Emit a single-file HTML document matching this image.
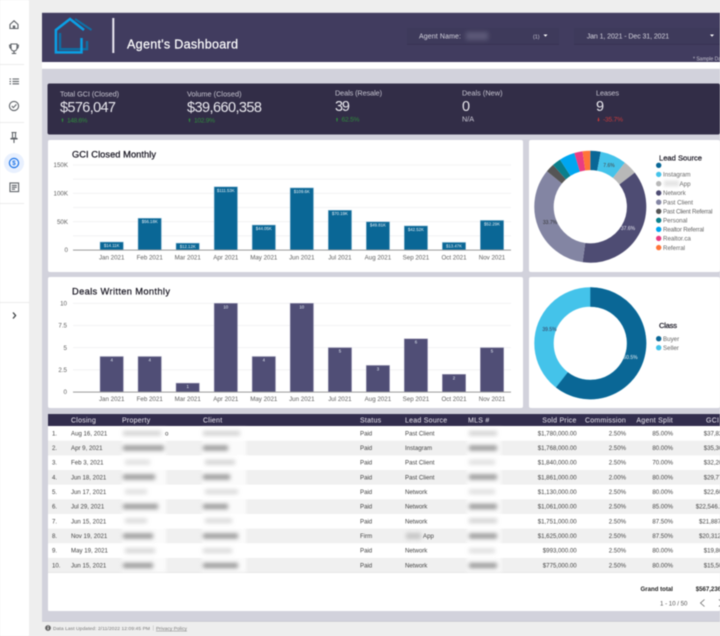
<!DOCTYPE html>
<html lang="en"><head><meta charset="utf-8"><title>Agent's Dashboard</title>
<style>
html,body{margin:0;padding:0;width:720px;height:636px;overflow:hidden;background:#eee}
svg{display:block;filter:blur(.4px)}
text{font-family:"Liberation Sans",sans-serif}
.k{font-size:7.3px;fill:#c8c6d2}
.v{font-size:14.5px;fill:#e9e8ee}
.u{font-size:6.6px;fill:#2f8a3c}
.ax{font-size:6.2px;fill:#5e5e5e}
.ttl{font-size:9.3px;fill:#15131f;stroke:#15131f;stroke-width:.22px}
.bl{font-size:4.3px;fill:#e6eef5;text-anchor:middle}
.lg{font-size:6.2px;fill:#666}
.lt{font-size:7.6px;fill:#15131f;stroke:#15131f;stroke-width:.2px}
.h{font-size:7px;fill:#eceaf2;letter-spacing:.25px}
.c{font-size:6.1px;fill:#444}
.e{text-anchor:end}
.m{text-anchor:middle}
.f{font-size:4.9px;fill:#777}
</style></head><body>
<svg width="720" height="636" viewBox="0 0 720 636" xmlns="http://www.w3.org/2000/svg">
<defs>
<filter id="b" filterUnits="userSpaceOnUse" x="0" y="0" width="720" height="636"><feGaussianBlur stdDeviation="2.1"/></filter>
<filter id="p" filterUnits="userSpaceOnUse" x="0" y="0" width="720" height="636"><feGaussianBlur stdDeviation="1.5"/></filter>
</defs>
<!-- page background -->
<rect width="720" height="636" fill="#eeeeee"/>
<rect x="0" y="0" width="29" height="636" fill="#fff"/>
<rect x="42" y="69" width="678" height="552" fill="#d2d2dc"/>
<rect x="42" y="621" width="678" height=".7" fill="#c4c4cc"/>
<!-- sidebar -->
<g fill="none" stroke="#5f6368" stroke-width="1.1">
<path d="M10 24.5 L14 20.8 L18 24.5 V28.5 H10 Z"/><rect x="12.8" y="25.5" width="2.4" height="3" fill="#5f6368" stroke="none"/>
<path d="M11 44 H17 V47.5 C17 50 15.5 51 14 51 C12.5 51 11 50 11 47.5 Z M11 45.2 H9.6 C9.6 47.5 10.5 48.5 11.4 48.7 M17 45.2 H18.4 C18.4 47.5 17.5 48.5 16.6 48.7 M14 51 V53 M11.8 53.4 H16.2"/>
<path d="M12.5 79 H19 M12.5 81.4 H19 M12.5 83.8 H19 M9.5 79 H11 M9.5 81.4 H11 M9.5 83.8 H11"/>
<circle cx="14" cy="106" r="4.6"/><path d="M11.8 106 L13.4 107.6 L16.4 104.4"/>
<path d="M11.5 132.5 H16.5 M12.5 132.5 V137.5 M15.5 132.5 V137.5 M10.5 139 C11.5 137.8 16.5 137.8 17.5 139 M10.5 139 H17.5 M14 139 V143"/>
</g>
<circle cx="14" cy="163" r="10" fill="#e8f0fe"/>
<circle cx="14" cy="163" r="4.6" fill="none" stroke="#1a73e8" stroke-width="1.2"/>
<text x="14" y="165.2" font-size="6.2" font-weight="bold" fill="#1a73e8" text-anchor="middle">$</text>
<g fill="none" stroke="#5f6368" stroke-width="1.1">
<rect x="10" y="183" width="8.6" height="8.6"/><path d="M11.8 185.4 H16.8 M11.8 187.3 H16.8 M11.8 189.2 H15"/>
<path d="M13 312.5 L15.6 315.5 L13 318.5" stroke="#3c4043" stroke-width="1.3"/>
</g>
<g fill="#ececec"><rect x="0" y="64" width="24" height="1"/><rect x="0" y="122" width="24" height="1"/><rect x="0" y="203" width="24" height="1"/><rect x="0" y="302" width="29" height="1"/></g>
<!-- header -->
<rect x="42" y="12.5" width="678" height=".8" fill="#a9a8b8"/>
<rect x="42" y="13" width="678" height="49" fill="#413c5f"/>
<rect x="42" y="62" width="678" height="6.5" fill="#fff"/>
<g fill="none" stroke-linejoin="miter">
<path d="M75 19 L91.5 30" stroke="#0f6fa5" stroke-width="2"/>
<path d="M60 33 V49.2 H87 V41" stroke="#0f6ea3" stroke-width="2.4"/>
<path d="M81.5 38 V52.4 H55.9 V30 L70 19 L84 30" stroke="#0aa0e6" stroke-width="2.5"/>
</g>
<rect x="112.3" y="18" width="2" height="35" fill="#eceaf2"/>
<text x="127" y="48.5" font-size="12.6" fill="#fff" stroke="#fff" stroke-width=".2" textLength="111" lengthAdjust="spacing">Agent's Dashboard</text>
<rect x="407" y="28" width="152" height="16.5" fill="#3e3a5b"/>
<rect x="407" y="44" width="152" height=".7" fill="#35314f"/>
<text x="419" y="38.7" font-size="7" fill="#d5d4de" textLength="42" lengthAdjust="spacing">Agent Name:</text>
<rect x="466" y="32" width="22" height="8" fill="#5c5877" filter="url(#b)"/>
<text x="533" y="38.5" font-size="5.4" fill="#c4c2d0">(1)</text>
<path d="M543.5 34.5 h4 l-2 2.2z" fill="#fff"/>
<rect x="574" y="28" width="146" height="16.5" fill="#3e3a5b"/>
<rect x="574" y="44" width="146" height=".7" fill="#35314f"/>
<text x="586.7" y="38.7" font-size="7" fill="#d5d4de" textLength="82.5" lengthAdjust="spacing">Jan 1, 2021 - Dec 31, 2021</text>
<path d="M710 34.5 h4 l-2 2.2z" fill="#fff"/>
<text x="693" y="60.7" font-size="5" fill="#c9c7d3">* Sample Data</text>
<!-- KPI band -->
<rect x="47.5" y="83.5" width="672.5" height="51" rx="2" fill="#322d47"/>
<text class="k" x="60" y="96.5" textLength="59" lengthAdjust="spacing">Total GCI (Closed)</text>
<text class="v" x="60" y="112" textLength="56" lengthAdjust="spacing">$576,047</text>
<text class="u" x="67" y="122.7" textLength="20.5" lengthAdjust="spacing">148.6%</text>
<path d="M62.5 118 l1.2 2 h-.7 v2 h-1 v-2 h-.7z" fill="#2f8a3c"/>
<text class="k" x="187" y="96.5" textLength="54.5" lengthAdjust="spacing">Volume (Closed)</text>
<text class="v" x="187" y="112" textLength="75" lengthAdjust="spacing">$39,660,358</text>
<text class="u" x="194" y="122.7" textLength="21" lengthAdjust="spacing">102.9%</text>
<path d="M189.5 118 l1.2 2 h-.7 v2 h-1 v-2 h-.7z" fill="#2f8a3c"/>
<text class="k" x="335" y="95.5" textLength="47" lengthAdjust="spacing">Deals (Resale)</text>
<text class="v" x="335" y="111" textLength="15" lengthAdjust="spacing">39</text>
<text class="u" x="341.5" y="121.7" textLength="18" lengthAdjust="spacing">62.5%</text>
<path d="M337 117.5 l1.2 2 h-.7 v2 h-1 v-2 h-.7z" fill="#2f8a3c"/>
<text class="k" x="462" y="95.5" textLength="40.5" lengthAdjust="spacing">Deals (New)</text>
<text class="v" x="462" y="111">0</text>
<text class="k" x="462" y="121.7">N/A</text>
<text class="k" x="596" y="95.5" textLength="23" lengthAdjust="spacing">Leases</text>
<text class="v" x="596" y="111">9</text>
<text class="u" x="603" y="121.7" style="fill:#c93a3a" textLength="20" lengthAdjust="spacing">-35.7%</text>
<path d="M598.5 121.7 l1.2 -2 h-.7 v-2 h-1 v2 h-.7z" fill="#c93a3a"/>
<!-- cards -->
<rect x="48" y="140" width="475" height="132" rx="2" fill="#fff"/>
<rect x="529" y="140" width="191" height="132" rx="2" fill="#fff"/>
<rect x="48" y="277" width="475" height="131" rx="2" fill="#fff"/>
<rect x="529" y="277" width="191" height="131" rx="2" fill="#fff"/>
<!-- chart 1 -->
<text class="ttl" x="72" y="157.3" textLength="84" lengthAdjust="spacing">GCI Closed Monthly</text>
<g stroke="#efeff1" stroke-width=".8"><path d="M73 165H511M73 179.2H511M73 193.3H511M73 207.5H511M73 221.7H511M73 235.8H511"/></g>
<text class="ax e" x="68" y="167.2">150K</text><text class="ax e" x="68" y="195.5">100K</text><text class="ax e" x="68" y="223.9">50K</text><text class="ax e" x="68" y="252.2">0</text>
<g fill="#0a6796" stroke="#9cc4da" stroke-width=".5">
<rect x="100" y="242" width="23.4" height="8"/><rect x="138" y="218.2" width="23.4" height="31.8"/><rect x="176" y="243.1" width="23.4" height="6.9"/><rect x="214.1" y="186.8" width="23.4" height="63.2"/><rect x="252.1" y="225" width="23.4" height="25"/><rect x="290.1" y="187.9" width="23.4" height="62.1"/><rect x="328.2" y="210.2" width="23.4" height="39.8"/><rect x="366.2" y="221.8" width="23.4" height="28.2"/><rect x="404.2" y="225.9" width="23.4" height="24.1"/><rect x="442.3" y="242.4" width="23.4" height="7.6"/><rect x="480.3" y="220.4" width="23.4" height="29.6"/>
</g>
<text class="bl" x="111.7" y="247">$14.11K</text><text class="bl" x="149.7" y="223">$56.18K</text><text class="bl" x="187.7" y="248">$12.12K</text><text class="bl" x="225.8" y="192">$111.53K</text><text class="bl" x="263.8" y="230">$44.05K</text><text class="bl" x="301.8" y="193">$109.6K</text><text class="bl" x="339.9" y="215">$70.19K</text><text class="bl" x="377.9" y="226.5">$49.81K</text><text class="bl" x="415.9" y="231">$42.52K</text><text class="bl" x="454" y="247.5">$13.47K</text><text class="bl" x="492" y="225.5">$52.29K</text>
<rect x="73" y="249.6" width="438" height="1" fill="#9a9a9a"/>
<text class="ax m" x="111.7" y="259.3">Jan 2021</text><text class="ax m" x="149.7" y="259.3">Feb 2021</text><text class="ax m" x="187.7" y="259.3">Mar 2021</text><text class="ax m" x="225.8" y="259.3">Apr 2021</text><text class="ax m" x="263.8" y="259.3">May 2021</text><text class="ax m" x="301.8" y="259.3">Jun 2021</text><text class="ax m" x="339.9" y="259.3">Jul 2021</text><text class="ax m" x="377.9" y="259.3">Aug 2021</text><text class="ax m" x="415.9" y="259.3">Sep 2021</text><text class="ax m" x="454" y="259.3">Oct 2021</text><text class="ax m" x="492" y="259.3">Nov 2021</text>
<!-- chart 2 -->
<text class="ttl" x="72" y="294.3" textLength="98" lengthAdjust="spacing">Deals Written Monthly</text>
<g stroke="#efeff1" stroke-width=".8"><path d="M73 303.3H511M73 325.5H511M73 347.6H511M73 369.8H511"/></g>
<text class="ax e" x="67" y="305.5">10</text><text class="ax e" x="67" y="327.7">7.5</text><text class="ax e" x="67" y="349.8">5</text><text class="ax e" x="67" y="372">2.5</text><text class="ax e" x="67" y="394.2">0</text>
<g fill="#504e76" stroke="#a8a7c0" stroke-width=".5">
<rect x="100" y="356.5" width="23.4" height="35.5"/><rect x="138" y="356.5" width="23.4" height="35.5"/><rect x="176" y="383.1" width="23.4" height="8.9"/><rect x="214.1" y="303.3" width="23.4" height="88.7"/><rect x="252.1" y="356.5" width="23.4" height="35.5"/><rect x="290.1" y="303.3" width="23.4" height="88.7"/><rect x="328.2" y="347.6" width="23.4" height="44.4"/><rect x="366.2" y="365.4" width="23.4" height="26.6"/><rect x="404.2" y="338.8" width="23.4" height="53.2"/><rect x="442.3" y="374.3" width="23.4" height="17.7"/><rect x="480.3" y="347.6" width="23.4" height="44.4"/>
</g>
<text class="bl" x="111.7" y="361.5">4</text><text class="bl" x="149.7" y="361.5">4</text><text class="bl" x="187.7" y="388">1</text><text class="bl" x="225.8" y="308.5">10</text><text class="bl" x="263.8" y="361.5">4</text><text class="bl" x="301.8" y="308.5">10</text><text class="bl" x="339.9" y="352.5">5</text><text class="bl" x="377.9" y="370.5">3</text><text class="bl" x="415.9" y="343.5">6</text><text class="bl" x="454" y="379.5">2</text><text class="bl" x="492" y="352.5">5</text>
<rect x="73" y="391.6" width="438" height="1" fill="#9a9a9a"/>
<text class="ax m" x="111.7" y="400.8">Jan 2021</text><text class="ax m" x="149.7" y="400.8">Feb 2021</text><text class="ax m" x="187.7" y="400.8">Mar 2021</text><text class="ax m" x="225.8" y="400.8">Apr 2021</text><text class="ax m" x="263.8" y="400.8">May 2021</text><text class="ax m" x="301.8" y="400.8">Jun 2021</text><text class="ax m" x="339.9" y="400.8">Jul 2021</text><text class="ax m" x="377.9" y="400.8">Aug 2021</text><text class="ax m" x="415.9" y="400.8">Sep 2021</text><text class="ax m" x="454" y="400.8">Oct 2021</text><text class="ax m" x="492" y="400.8">Nov 2021</text>
<!-- donut 1 -->
<g fill="none" stroke-width="19.4">
<path d="M590.3 160.4 A46.3 46.3 0 0 1 598.98 161.22" stroke="#0a6796"/>
<path d="M598.98 161.22 A46.3 46.3 0 0 1 618.9 170.29" stroke="#44c3ea"/>
<path d="M618.9 170.29 A46.3 46.3 0 0 1 627.07 178.56" stroke="#b8b8b8"/>
<path d="M627.07 178.56 A46.3 46.3 0 0 1 583.92 252.56" stroke="#4e4c73"/>
<path d="M583.92 252.56 A46.3 46.3 0 0 1 554.44 177.41" stroke="#8385a3"/>
<path d="M554.44 177.41 A46.3 46.3 0 0 1 559.47 172.16" stroke="#555555"/>
<path d="M559.47 172.16 A46.3 46.3 0 0 1 565.25 167.76" stroke="#0a7f8c"/>
<path d="M565.25 167.76 A46.3 46.3 0 0 1 577.1 162.32" stroke="#00a6f0"/>
<path d="M577.1 162.32 A46.3 46.3 0 0 1 583.92 160.84" stroke="#ea3d82"/>
<path d="M583.92 160.84 A46.3 46.3 0 0 1 590.3 160.4" stroke="#ff7438"/>
</g>
<text x="609" y="167" font-size="5" fill="#444" class="m">7.6%</text>
<text x="628" y="230" font-size="5" fill="#e4e4ee" class="m">37.6%</text>
<text x="550" y="224" font-size="5" fill="#333" class="m">33.7%</text>
<text class="lt" x="659" y="160.5" textLength="43" lengthAdjust="spacing">Lead Source</text>
<circle cx="658.7" cy="165.3" r="2.7" fill="#0a6796"/>
<circle cx="658.7" cy="174.4" r="2.7" fill="#44c3ea"/><text class="lg" x="663" y="176.6">Instagram</text>
<circle cx="658.7" cy="183.7" r="2.7" fill="#b8b8b8"/><rect x="664" y="180.5" width="15" height="6" fill="#e4e4e4" filter="url(#p)"/><text class="lg" x="679.5" y="186">App</text>
<circle cx="658.7" cy="193" r="2.7" fill="#4e4c73"/><text class="lg" x="663" y="195.2">Network</text>
<circle cx="658.7" cy="202.2" r="2.7" fill="#8385a3"/><text class="lg" x="663" y="204.4">Past Client</text>
<circle cx="658.7" cy="211.3" r="2.7" fill="#555"/><text class="lg" x="663" y="213.5" textLength="49.5" lengthAdjust="spacing">Past Client Referral</text>
<circle cx="658.7" cy="220.3" r="2.7" fill="#0a7f8c"/><text class="lg" x="663" y="222.5">Personal</text>
<circle cx="658.7" cy="229.3" r="2.7" fill="#00a6f0"/><text class="lg" x="663" y="231.5" textLength="41" lengthAdjust="spacing">Realtor Referral</text>
<circle cx="658.7" cy="238.4" r="2.7" fill="#ea3d82"/><text class="lg" x="663" y="240.6">Realtor.ca</text>
<circle cx="658.7" cy="247.6" r="2.7" fill="#ff7438"/><text class="lg" x="663" y="249.8">Referral</text>
<!-- donut 2 -->
<g fill="none" stroke-width="19.4">
<circle cx="590.3" cy="343.3" r="46.3" stroke="#44c3ea"/>
<path d="M590.3 297 A46.3 46.3 0 1 1 561.92 379.89" stroke="#0a6796"/>
</g>
<text x="630.5" y="359" font-size="5" fill="#e4eef4" class="m">60.5%</text>
<text x="549.5" y="331" font-size="5" fill="#335" class="m">39.5%</text>
<text class="lt" x="659" y="328" textLength="18" lengthAdjust="spacing">Class</text>
<circle cx="658.7" cy="338.7" r="2.7" fill="#0a6796"/><text class="lg" x="663" y="340.9">Buyer</text>
<circle cx="658.7" cy="347.7" r="2.7" fill="#44c3ea"/><text class="lg" x="663" y="349.9">Seller</text>
<!-- table -->
<rect x="48" y="414" width="672" height="197" rx="1" fill="#fff"/>
<rect x="48" y="414" width="672" height="12" fill="#322d4d"/>
<g fill="#f0f0f0"><rect x="48" y="440.7" width="672" height="14.65"/><rect x="48" y="470" width="672" height="14.65"/><rect x="48" y="499.3" width="672" height="14.65"/><rect x="48" y="528.6" width="672" height="14.65"/><rect x="48" y="557.9" width="672" height="14.65"/></g>
<rect x="48" y="572.3" width="672" height=".6" fill="#e2e2e2"/>
<g fill="#fff" fill-opacity=".75" filter="url(#p)"><rect x="122" y="428" width="44" height="144"/><rect x="202" y="428" width="44" height="144"/><rect x="467" y="428" width="34" height="144"/></g>
<text class="h" x="71" y="422.6">Closing</text><text class="h" x="122" y="422.6">Property</text><text class="h" x="203" y="422.6">Client</text><text class="h" x="360" y="422.6">Status</text><text class="h" x="405" y="422.6">Lead Source</text><text class="h" x="468" y="422.6">MLS #</text><text class="h e" x="576.7" y="422.6">Sold Price</text><text class="h e" x="626" y="422.6">Commission</text><text class="h e" x="673" y="422.6">Agent Split</text><text class="h" x="706" y="422.6">GCI</text>
<!-- blurred cells -->
<g filter="url(#b)">
<g fill="#a8a8a8">
<rect x="123" y="431" width="38" height="4.5" fill-opacity=".55"/><rect x="203" y="431" width="37" height="4.5" fill-opacity=".55"/><rect x="469" y="431" width="28" height="4.5" fill-opacity=".55"/>
<rect x="125" y="460" width="25" height="4.5" fill-opacity=".4"/><rect x="205" y="460" width="30" height="4.5" fill-opacity=".55"/><rect x="469" y="460" width="26" height="4.5" fill-opacity=".4"/>
<rect x="125" y="489.5" width="22" height="4.5" fill-opacity=".4"/><rect x="205" y="489.5" width="33" height="4.5" fill-opacity=".45"/><rect x="469" y="489.5" width="26" height="4.5" fill-opacity=".4"/>
<rect x="125" y="518.5" width="22" height="4.5" fill-opacity=".45"/><rect x="205" y="518.5" width="27" height="4.5" fill-opacity=".45"/><rect x="469" y="518.5" width="28" height="4.5" fill-opacity=".55"/>
<rect x="125" y="548.5" width="30" height="4.5" fill-opacity=".5"/><rect x="203" y="548.5" width="29" height="4.5" fill-opacity=".45"/><rect x="469" y="548.5" width="26" height="4.5" fill-opacity=".4"/>
</g>
<g fill="#949494">
<rect x="123" y="445.5" width="41" height="5"/><rect x="203" y="445.5" width="25" height="5"/><rect x="469" y="445.5" width="28" height="5"/>
<rect x="123" y="474.5" width="32" height="5"/><rect x="203" y="474.5" width="27" height="5"/><rect x="469" y="474.5" width="28" height="5"/>
<rect x="123" y="504" width="35" height="5"/><rect x="203" y="504" width="25" height="5"/><rect x="469" y="504" width="28" height="5"/>
<rect x="123" y="533.5" width="30" height="5"/><rect x="203" y="533.5" width="35" height="5"/><rect x="469" y="533.5" width="28" height="5"/>
<rect x="123" y="563" width="30" height="5"/><rect x="203" y="563" width="35" height="5"/><rect x="469" y="563" width="28" height="5"/>
</g>
<rect x="406" y="533" width="15" height="6" fill="#c4c4c4"/>
</g>
<!-- rows -->
<text class="c" x="52" y="435.4">1.</text><text class="c" x="71" y="435.4">Aug 16, 2021</text><text class="c" x="165" y="435.4">o</text><text class="c" x="360" y="435.4">Paid</text><text class="c" x="405" y="435.4">Past Client</text><text class="c e" x="576.7" y="435.4">$1,780,000.00</text><text class="c e" x="626" y="435.4">2.50%</text><text class="c e" x="673" y="435.4">85.00%</text><text class="c" x="703.7" y="435.4">$37,825.00</text>
<text class="c" x="52" y="450.1">2.</text><text class="c" x="71" y="450.1">Apr 9, 2021</text><text class="c" x="360" y="450.1">Paid</text><text class="c" x="405" y="450.1">Instagram</text><text class="c e" x="576.7" y="450.1">$1,768,000.00</text><text class="c e" x="626" y="450.1">2.50%</text><text class="c e" x="673" y="450.1">80.00%</text><text class="c" x="703.7" y="450.1">$35,360.00</text>
<text class="c" x="52" y="464.7">3.</text><text class="c" x="71" y="464.7">Feb 3, 2021</text><text class="c" x="360" y="464.7">Paid</text><text class="c" x="405" y="464.7">Past Client</text><text class="c e" x="576.7" y="464.7">$1,840,000.00</text><text class="c e" x="626" y="464.7">2.50%</text><text class="c e" x="673" y="464.7">70.00%</text><text class="c" x="703.7" y="464.7">$32,200.00</text>
<text class="c" x="52" y="479.4">4.</text><text class="c" x="71" y="479.4">Jun 18, 2021</text><text class="c" x="360" y="479.4">Paid</text><text class="c" x="405" y="479.4">Past Client</text><text class="c e" x="576.7" y="479.4">$1,861,000.00</text><text class="c e" x="626" y="479.4">2.00%</text><text class="c e" x="673" y="479.4">80.00%</text><text class="c" x="703.7" y="479.4">$29,776.00</text>
<text class="c" x="52" y="494">5.</text><text class="c" x="71" y="494">Jun 17, 2021</text><text class="c" x="360" y="494">Paid</text><text class="c" x="405" y="494">Network</text><text class="c e" x="576.7" y="494">$1,130,000.00</text><text class="c e" x="626" y="494">2.50%</text><text class="c e" x="673" y="494">80.00%</text><text class="c" x="703.7" y="494">$22,600.00</text>
<text class="c" x="52" y="508.7">6.</text><text class="c" x="71" y="508.7">Jul 29, 2021</text><text class="c" x="360" y="508.7">Paid</text><text class="c" x="405" y="508.7">Network</text><text class="c e" x="576.7" y="508.7">$1,061,000.00</text><text class="c e" x="626" y="508.7">2.50%</text><text class="c e" x="673" y="508.7">85.00%</text><text class="c" x="695.7" y="508.7">$22,546.25</text>
<text class="c" x="52" y="523.3">7.</text><text class="c" x="71" y="523.3">Jun 15, 2021</text><text class="c" x="360" y="523.3">Paid</text><text class="c" x="405" y="523.3">Network</text><text class="c e" x="576.7" y="523.3">$1,751,000.00</text><text class="c e" x="626" y="523.3">2.50%</text><text class="c e" x="673" y="523.3">87.50%</text><text class="c" x="699" y="523.3">$21,887.50</text>
<text class="c" x="52" y="538">8.</text><text class="c" x="71" y="538">Nov 19, 2021</text><text class="c" x="360" y="538">Firm</text><text class="c" x="423" y="538">App</text><text class="c e" x="576.7" y="538">$1,625,000.00</text><text class="c e" x="626" y="538">2.50%</text><text class="c e" x="673" y="538">87.50%</text><text class="c" x="699" y="538">$20,312.50</text>
<text class="c" x="52" y="552.6">9.</text><text class="c" x="71" y="552.6">May 19, 2021</text><text class="c" x="360" y="552.6">Paid</text><text class="c" x="405" y="552.6">Network</text><text class="c e" x="576.7" y="552.6">$993,000.00</text><text class="c e" x="626" y="552.6">2.50%</text><text class="c e" x="673" y="552.6">80.00%</text><text class="c" x="703.7" y="552.6">$19,860.00</text>
<text class="c" x="52" y="567.3">10.</text><text class="c" x="71" y="567.3">Jun 15, 2021</text><text class="c" x="360" y="567.3">Paid</text><text class="c" x="405" y="567.3">Network</text><text class="c e" x="576.7" y="567.3">$775,000.00</text><text class="c e" x="626" y="567.3">2.50%</text><text class="c e" x="673" y="567.3">80.00%</text><text class="c" x="703.7" y="567.3">$15,500.00</text>
<text class="c e" x="673" y="591.2" font-weight="bold" style="fill:#222">Grand total</text>
<text class="c" x="695.7" y="591.2" font-weight="bold" style="fill:#222">$567,236</text>
<text class="c" x="660" y="605.4" style="fill:#555">1 - 10 / 50</text>
<path d="M704.5 599.5 L700.5 603 L704.5 606.5" fill="none" stroke="#666" stroke-width=".8"/>
<path d="M719 599.5 L723 603 L719 606.5" fill="none" stroke="#444" stroke-width=".8"/>
<!-- footer -->
<circle cx="48" cy="628" r="2.9" fill="#666"/><rect x="47.6" y="627.4" width=".9" height="2.2" fill="#eee"/><rect x="47.6" y="626" width=".9" height=".9" fill="#eee"/>
<text class="f" x="53" y="629.8" textLength="97" lengthAdjust="spacing">Data Last Updated: 2/11/2022 12:09:45 PM</text>
<rect x="153" y="625.5" width=".5" height="5" fill="#bbb"/>
<text class="f" x="156" y="629.8" text-decoration="underline" textLength="31" lengthAdjust="spacing">Privacy Policy</text>
</svg>
</body></html>
